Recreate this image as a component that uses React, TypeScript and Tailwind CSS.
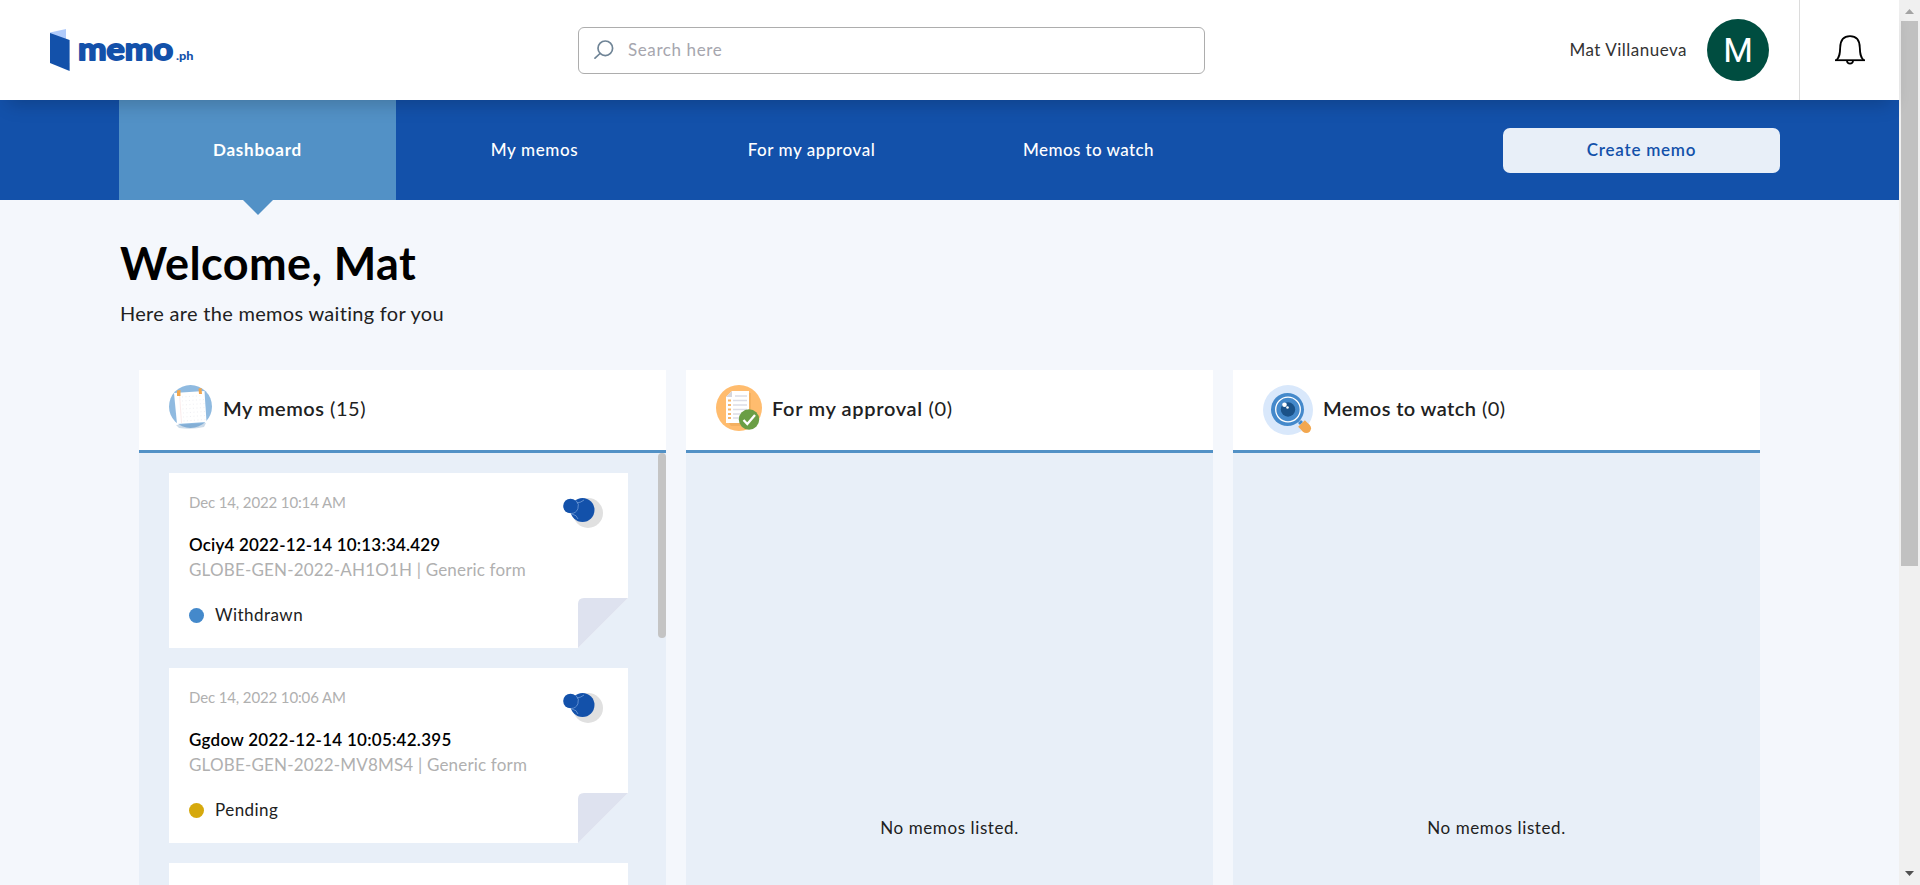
import React from "react";

const navItems = [
  { label: "Dashboard", active: true, cls: "tracking-[0.75px] font-bold" },
  { label: "My memos", active: false, cls: "tracking-[0.6px]" },
  { label: "For my approval", active: false, cls: "tracking-[0.55px]" },
  { label: "Memos to watch", active: false, cls: "tracking-[0.4px]" },
];

const memos = [
  { date: "Dec 14, 2022 10:14 AM", title: "Ociy4 2022-12-14 10:13:34.429", code: "GLOBE-GEN-2022-AH1O1H | Generic form", status: "Withdrawn", dot: "bg-[#4489cb]", tracking: "tracking-[0.18px]" },
  { date: "Dec 14, 2022 10:06 AM", title: "Ggdow 2022-12-14 10:05:42.395", code: "GLOBE-GEN-2022-MV8MS4 | Generic form", status: "Pending", dot: "bg-[#d6a90d]", tracking: "tracking-[0.27px]" },
];

function Logo() {
  return (
    <svg width="146" height="46" viewBox="0 0 146 46" className="block">
      <path d="M0 5.500 16 2v18L0 11z" fill="#b0cbfb" />
      <path d="M0 6 19.600 13v31L0 36z" fill="#1351aa" />
      <text x="28" y="33" fontSize="31" fontWeight="700" fill="#1351aa" stroke="#1351aa" strokeWidth="1.900" strokeLinejoin="round" textLength="95" lengthAdjust="spacingAndGlyphs">memo</text>
      <text x="126" y="32.500" fontSize="12" fontWeight="900" fill="#1351aa" textLength="17.500" lengthAdjust="spacingAndGlyphs">.ph</text>
    </svg>
  );
}

function SearchIcon() {
  return (
    <svg width="20" height="20" viewBox="0 0 20 20" fill="none" stroke="#6f8496" strokeWidth="1.7" strokeLinecap="round">
      <circle cx="11.3" cy="8.3" r="7.3" />
      <path d="M6 13.5 1 18.2" />
    </svg>
  );
}

function BellIcon() {
  return (
    <svg width="30" height="30" viewBox="0 0 30 30" fill="none" stroke="#000" strokeWidth="1.8">
      <path d="M0 25.200h30" />
      <path d="M1.500 25C4.800 22 5 18 5.200 12.500 5.400 5 9 1.200 15 1.200S24.600 5 24.800 12.500C25 18 25.200 22 28.500 25" />
      <path d="M12 26c.3 3.400 5.700 3.400 6 0" />
    </svg>
  );
}

function BoardIcon() {
  return (
    <svg width="43" height="46" viewBox="0 0 43 46">
      <circle cx="21.500" cy="21.500" r="21.500" fill="#8fbae0" />
      <path d="M7 40 37 38l-2 4q-12 3-25 1z" fill="#6c97c0" opacity=".35" />
      <path d="M5 8 35.500 6l2 31L8 39z" fill="#fff" />
      <path d="M10.500 9 12.500 38" stroke="#f9e6e6" strokeWidth=".8" />
      <g stroke="#f0f0f4" strokeWidth="1" strokeDasharray="1 2.500">
        <path d="M13 12 34 10.500M13 16l22-1.500M13.500 20l22-1.500M13.500 24l22-1.500M14 28l22-1.500M14 32l22-1.500M14.500 36l22-1.500" />
      </g>
      <path d="M8 5.500 11.500 5v6H8zM29.500 3.500 32.500 3l.5 6h-3z" fill="#f2a74f" />
    </svg>
  );
}

function ApprovalIcon() {
  return (
    <svg width="46" height="46" viewBox="0 0 46 46">
      <circle cx="23" cy="23" r="23" fill="#ffbc6e" />
      <path d="M13 38h20V8h2v30l-5 3H15z" fill="#e9a352" opacity=".5" />
      <path d="M16 6h17v32H10V12z" fill="#fff" />
      <path d="M16 6v6h-6z" fill="#d5d6dd" />
      <path d="M19 11h12M17 15.500h14M17 20h14M17 24.500h14M17 29h8M17 33h7" stroke="#dcdde6" strokeWidth="1.500" />
      <path d="M12 15.500h3M12 20h3M12 24.500h3M12 29h3M12 33h3" stroke="#f6b56a" strokeWidth="2" />
      <circle cx="33" cy="34.500" r="10.200" fill="#6a9e45" />
      <path d="m27.500 35 3.800 4L39 30" fill="none" stroke="#fff" strokeWidth="2.300" />
    </svg>
  );
}

function WatchIcon() {
  return (
    <svg width="50" height="50" viewBox="0 0 50 50">
      <circle cx="25" cy="25" r="25" fill="#d9e8fb" />
      <circle cx="24.500" cy="24.500" r="16.500" fill="#4489cb" />
      <circle cx="25" cy="24.500" r="12.300" fill="#4489cb" stroke="#fff" strokeWidth="1.300" />
      <circle cx="25" cy="24.500" r="7.200" fill="#1a5289" />
      <circle cx="21.500" cy="19.800" r="2.300" fill="#fff" />
      <circle cx="24.500" cy="22.500" r="1.300" fill="#fff" />
      <path d="m35 38 3-3 2 2-3 3z" fill="#4489cb" />
      <path d="m38.500 38.500 5 5" stroke="#f2a74f" strokeWidth="9.500" />
      <circle cx="43.300" cy="43.300" r="4.750" fill="#f2a74f" />
    </svg>
  );
}

function MemoGlyph() {
  return (
    <svg width="40" height="30" viewBox="0 0 40 30" className="block">
      <circle cx="25" cy="15" r="15" fill="#e0e0e0" />
      <circle cx="19.500" cy="12" r="12" fill="#1351aa" />
      <circle cx="7.500" cy="8" r="7.300" fill="#1351aa" />
      <path d="M13 2.500A7.500 7.500 0 0 1 8 15.500M14 5q4-.5 7-3M9 16q5 1 6 5" fill="none" stroke="#7fa6dc" strokeWidth=".7" />
    </svg>
  );
}

function MemoCard({ memo }: { memo: (typeof memos)[number] }) {
  return (
    <article className="relative h-[175px] w-[459px] shrink-0 bg-white pl-5 pt-[19px]">
      <div className="flex h-[43px] justify-between pr-[25px]">
        <p className="text-[15px] leading-[20px] tracking-[-0.13px] text-[#b0b0b0]">{memo.date}</p>
        <div className="pt-[6px]"><MemoGlyph /></div>
      </div>
      <h3 className={"text-[17px] font-semibold leading-[20px] text-black " + memo.tracking}>{memo.title}</h3>
      <p className="mt-[5px] text-[17px] leading-[20px] tracking-[0.18px] text-[#b0b0b0]">{memo.code}</p>
      <div className="mt-[25px] flex items-center gap-[11px]">
        <span className={"size-[15px] rounded-full " + memo.dot} />
        <span className="text-[17px] leading-[20px] tracking-[0.45px] text-[#212121]">{memo.status}</span>
      </div>
      <svg width="50" height="50" viewBox="0 0 50 50" className="absolute bottom-0 right-0">
        <path d="M50 0v50H0z" fill="#e8eff8" />
        <path d="M0 50V6q0-6 6-6h44z" fill="#dee2ef" />
      </svg>
    </article>
  );
}

function Column({ icon, title, count, gap, children }: { icon: React.ReactNode; title: string; count: number; gap: string; children: React.ReactNode }) {
  return (
    <section className="flex w-[527px] flex-col bg-[#e8eff8]">
      <header className="flex h-[83px] shrink-0 items-start border-b-[3px] border-[#5291c6] bg-white pl-[30px] pt-[15px]">
        {icon}
        <h2 className={"pt-[11px] text-[20px] leading-[24px] text-[#212121] " + gap}>
          <span className="font-semibold">{title}</span> ({count})
        </h2>
      </header>
      {children}
    </section>
  );
}

function EmptyBody() {
  return (
    <div className="flex justify-center pt-[363px] text-[17px] leading-[24px] tracking-[0.6px] text-[#212121]">
      No memos listed.
    </div>
  );
}

export default function App() {
  return (
    <div className="flex h-[885px] w-[1920px] overflow-hidden bg-[#f4f7fc] font-['Lato',sans-serif]">
      <div className="flex w-[1899px] flex-col">
        <header className="relative z-10 flex h-[100px] shrink-0 items-center bg-white shadow-[0_12px_18px_-8px_rgba(0,0,0,0.2)]">
          <div className="w-[528px] pl-[50px]"><Logo /></div>
          <div className="ml-[50px] flex h-[47px] w-[627px] items-center gap-[14px] rounded-[6px] border border-[#adadad] pl-[15px]">
            <SearchIcon />
            <span className="text-[17px] tracking-[0.6px] text-[#a6a6ae]">Search here</span>
          </div>
          <div className="flex h-full flex-1 items-center justify-end gap-[20px] border-r border-[#dcdcdc] pr-[30px]">
            <span className="text-[17px] tracking-[0.5px] text-[#333]">Mat Villanueva</span>
            <div className="flex size-[62px] items-center justify-center rounded-full bg-[#004d40] font-['Roboto',sans-serif] text-[34px] text-white">M</div>
          </div>
          <div className="flex w-[99px] justify-center"><BellIcon /></div>
        </header>
        <nav className="flex h-[100px] shrink-0 items-center bg-[#1351aa] pl-[119px]">
          {navItems.map((n) => (
            <a key={n.label} className={"relative flex h-full w-[277px] items-center justify-center text-[17px] text-white " + n.cls + (n.active ? " bg-[#5291c6]" : " font-medium")}>
              {n.label}
              {n.active && (
                <svg width="30" height="15" viewBox="0 0 30 15" className="absolute left-[124px] top-full">
                  <path d="M0 0h30L15 15z" fill="#5291c6" />
                </svg>
              )}
            </a>
          ))}
          <button className="ml-[276px] h-[45px] w-[277px] rounded-[7px] bg-[#e8eff8] text-[17px] font-semibold tracking-[0.75px] text-[#1351aa]">Create memo</button>
        </nav>
        <main className="flex min-h-0 flex-1 flex-col pl-[119px]">
          <h1 className="pl-px pt-[37px] text-[45px] font-bold leading-[52px] tracking-[0.4px] text-black">Welcome, Mat</h1>
          <p className="mt-[12px] h-[69px] pl-px text-[20px] leading-[24px] tracking-[0.3px] text-[#212121]">Here are the memos waiting for you</p>
          <div className="flex min-h-0 flex-1 gap-[20px] overflow-hidden pl-[20px]">
            <Column icon={<BoardIcon />} title="My memos" count={15} gap="pl-[11px] tracking-[0.5px]">
              <div className="flex min-h-0 flex-1 justify-between overflow-hidden pl-[30px]">
                <div className="flex flex-col gap-[20px] pt-[20px]">
                  {memos.map((m) => <MemoCard key={m.date} memo={m} />)}
                  <article className="h-[175px] w-[459px] shrink-0 bg-white" />
                </div>
                <div className="h-[185px] w-[8px] rounded-[4px] bg-[#c4c4c4]" />
              </div>
            </Column>
            <Column icon={<ApprovalIcon />} title="For my approval" count={0} gap="pl-[10px] tracking-[0.65px]"><EmptyBody /></Column>
            <Column icon={<WatchIcon />} title="Memos to watch" count={0} gap="pl-[10px] tracking-[0.4px]"><EmptyBody /></Column>
          </div>
        </main>
      </div>
      <div className="flex w-[21px] flex-col items-center justify-between bg-[#f0f0f0]">
        <div className="flex flex-col items-center">
          <svg width="9" height="21" viewBox="0 0 9 21"><path d="M0 14 4.500 9 9 14z" fill="#a3a3a3" /></svg>
          <div className="h-[545px] w-[17px] bg-[#c1c1c1]" />
        </div>
        <svg width="9" height="14" viewBox="0 0 9 14"><path d="M0 0h9L4.500 5z" fill="#505050" /></svg>
      </div>
    </div>
  );
}
